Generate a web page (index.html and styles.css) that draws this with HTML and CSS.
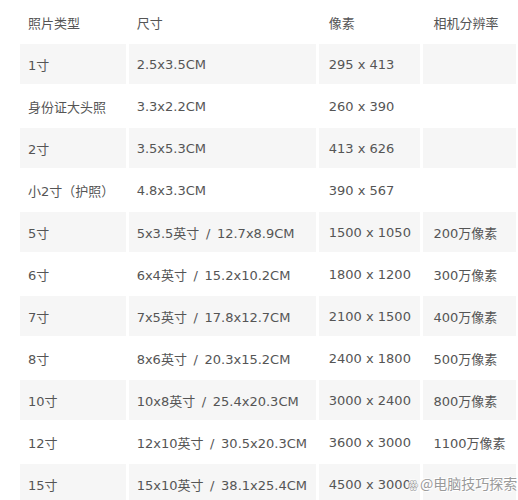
FILE: index.html
```html
<!DOCTYPE html>
<html lang="zh">
<head>
<meta charset="utf-8">
<title>照片尺寸表</title>
<link rel="stylesheet" href="styles.css">
</head>
<body>
<div class="wrap">
<table class="sizes">
  <colgroup>
    <col class="c1"><col class="c2"><col class="c3"><col class="c4">
  </colgroup>
  <thead>
    <tr><th>照片类型</th><th>尺寸</th><th>像素</th><th>相机分辨率</th></tr>
  </thead>
  <tbody>
    <tr class="alt"><td>1寸</td><td>2.5x3.5CM</td><td>295 x 413</td><td></td></tr>
    <tr><td>身份证大头照</td><td>3.3x2.2CM</td><td>260 x 390</td><td></td></tr>
    <tr class="alt"><td>2寸</td><td>3.5x5.3CM</td><td>413 x 626</td><td></td></tr>
    <tr><td>小2寸（护照）</td><td>4.8x3.3CM</td><td>390 x 567</td><td></td></tr>
    <tr class="alt"><td>5寸</td><td>5x3.5英寸 <span class="sep">/</span> 12.7x8.9CM</td><td>1500 x 1050</td><td>200万像素</td></tr>
    <tr><td>6寸</td><td>6x4英寸 <span class="sep">/</span> 15.2x10.2CM</td><td>1800 x 1200</td><td>300万像素</td></tr>
    <tr class="alt"><td>7寸</td><td>7x5英寸 <span class="sep">/</span> 17.8x12.7CM</td><td>2100 x 1500</td><td>400万像素</td></tr>
    <tr><td>8寸</td><td>8x6英寸 <span class="sep">/</span> 20.3x15.2CM</td><td>2400 x 1800</td><td>500万像素</td></tr>
    <tr class="alt"><td>10寸</td><td>10x8英寸 <span class="sep">/</span> 25.4x20.3CM</td><td>3000 x 2400</td><td>800万像素</td></tr>
    <tr><td>12寸</td><td>12x10英寸 <span class="sep">/</span> 30.5x20.3CM</td><td>3600 x 3000</td><td>1100万像素</td></tr>
    <tr class="alt"><td>15寸</td><td>15x10英寸 <span class="sep">/</span> 38.1x25.4CM</td><td>4500 x 3000</td><td></td></tr>
  </tbody>
</table>
<div class="watermark"><span class="wm-logo">ꙮ</span>@电脑技巧探索</div>
</div>
</body>
</html>
```

FILE: styles.css
```css
html, body {
  margin: 0;
  padding: 0;
  background: #ffffff;
}
.wrap {
  position: relative;
  width: 518px;
  height: 500px;
  overflow: hidden;
}
.sizes {
  border-collapse: separate;
  border-spacing: 3px 2px;
  margin: 0 0 0 17px;
  table-layout: fixed;
  width: 502px;
  font-family: "DejaVu Sans", "Noto Sans CJK SC", sans-serif;
  font-size: 13px;
  color: #555555;
}
.c1 { width: 105px; }
.c2 { width: 186px; }
.c3 { width: 101px; }
.c4 { width: 92px; }
.sizes th,
.sizes td {
  height: 40px;
  padding: 0 0 0 8px;
  text-align: left;
  vertical-align: middle;
  font-weight: normal;
  white-space: nowrap;
  overflow: hidden;
}
.sizes td:nth-child(2) {
  word-spacing: 1.5px;
}
.sep {
  margin: 0 1px;
}
.sizes th:nth-child(3),
.sizes td:nth-child(3),
.sizes th:nth-child(4),
.sizes td:nth-child(4) {
  padding-left: 10px;
}
.sizes tr.alt td {
  background: #f6f6f6;
}
.watermark {
  position: absolute;
  left: 408px;
  top: 474px;
  font-family: "Noto Sans CJK SC", sans-serif;
  font-size: 14px;
  line-height: 18px;
  color: #9a9a9a;
  text-shadow: 0 0 2px #ffffff, 0 0 1px #ffffff, 1px 1px 0 #ffffff, -1px -1px 0 #ffffff;
  white-space: nowrap;
}
.wm-logo {
  font-size: 12px;
  margin-right: 1px;
}
```
